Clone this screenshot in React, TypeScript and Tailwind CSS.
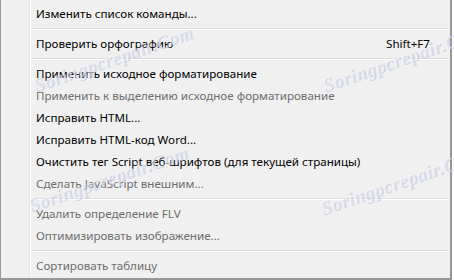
import * as React from 'react';

type Item = { label: string; shortcut?: string; disabled?: boolean } | 'sep';

const items: Item[] = [
    { label: 'Изменить список команды...' },
    'sep',
    { label: 'Проверить орфографию', shortcut: 'Shift+F7' },
    'sep',
    { label: 'Применить исходное форматирование' },
    { label: 'Применить к выделению исходное форматирование', disabled: true },
    { label: 'Исправить HTML...' },
    { label: 'Исправить HTML-код Word...' },
    { label: 'Очистить тег Script веб-шрифтов (для текущей страницы)' },
    { label: 'Сделать JavaScript внешним...', disabled: true },
    'sep',
    { label: 'Удалить определение FLV', disabled: true },
    { label: 'Оптимизировать изображение...', disabled: true },
    'sep',
    { label: 'Сортировать таблицу', disabled: true },
];

function Watermark({ className }: { className: string }) {
    return (
        <span
            className={
                'pointer-events-none absolute flex h-[24px] w-[180px] -rotate-[19deg] items-center justify-center whitespace-nowrap text-[19px] italic font-bold tracking-wide text-white/40 opacity-70 [font-family:"Liberation_Serif",serif] [text-shadow:1px_1px_0_#c2c6e0] ' +
                className
            }
        >
            Soringpcrepair.Com
        </span>
    );
}

export default function App() {
    return (
        <div className="relative h-[280px] w-[454px] overflow-hidden bg-white [font-family:'Noto_Sans',sans-serif]">
            <div className="flex h-[280px] w-[452px] flex-col border-b-2 border-l border-r-2 border-[#979797] bg-[#f0f0f0] pt-[3px]">
                <div className="relative flex flex-col">
                    {/* gutter line */}
                    <div className="absolute bottom-0 left-[28px] top-[-3px] w-[2px] border-l border-r border-l-[#e2e3e3] border-r-white" />
                    {items.map((item, i) =>
                        item === 'sep' ? (
                            <div key={i} className="flex h-[8px] items-center pl-[30px] pr-[1px]">
                                <div className="h-[2px] w-full border-t border-b border-t-[#e0e0e0] border-b-white" />
                            </div>
                        ) : (
                            <div
                                key={i}
                                className={
                                    'flex h-[22px] items-center justify-between pl-[35px] pr-[20px] text-[11.6px] leading-none ' +
                                    (item.disabled ? 'text-[#6d6d6d]' : 'text-black')
                                }
                            >
                                <span>{item.label}</span>
                                {item.shortcut && <span>{item.shortcut}</span>}
                            </div>
                        ),
                    )}
                </div>
            </div>

            <Watermark className="left-[23px] top-[47px]" />
            <Watermark className="left-[312px] top-[47px]" />
            <Watermark className="left-[18px] top-[167px]" />
            <Watermark className="left-[310px] top-[170px]" />
        </div>
    );
}
